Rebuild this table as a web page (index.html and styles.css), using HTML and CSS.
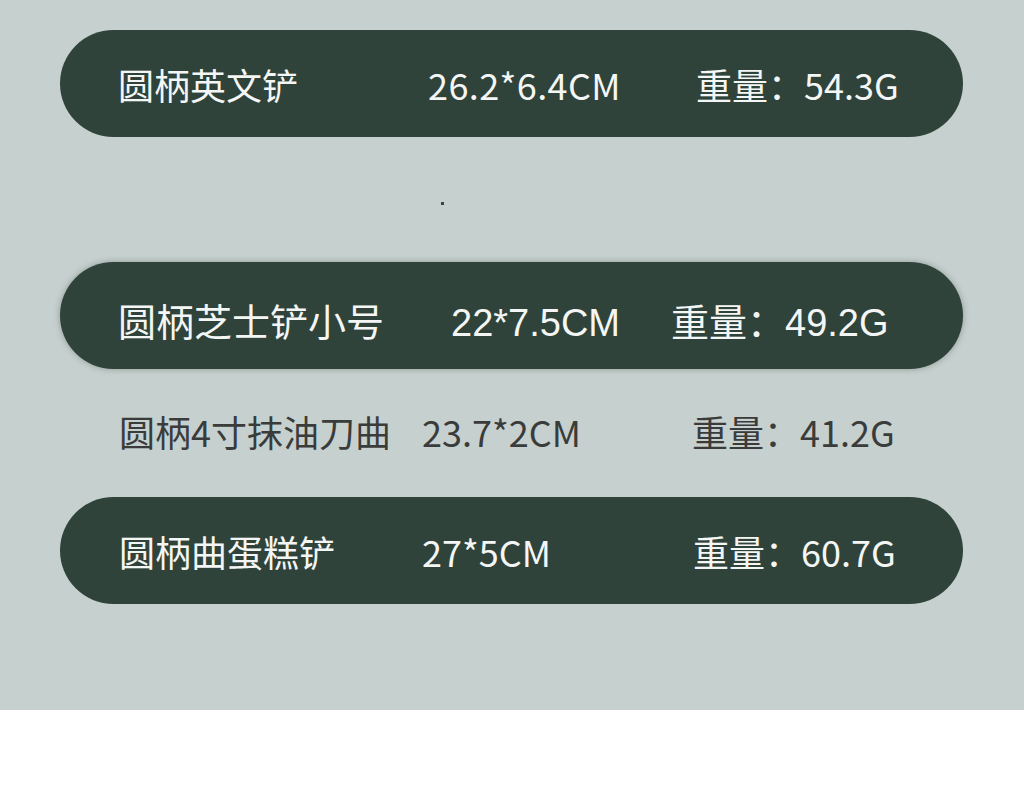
FILE: index.html
```html
<!DOCTYPE html>
<html lang="zh-CN">
<head>
<meta charset="utf-8">
<title>圆柄铲规格</title>
<link rel="stylesheet" href="styles.css">
</head>
<body>
<main class="panel">
  <div class="row pill r1">
    <span class="name">圆柄英文铲</span>
    <span class="dims">26.2*6.4CM</span>
    <span class="weight">重量：54.3G</span>
  </div>
  <div class="speck-line"><span class="speck"></span></div>
  <div class="row pill r2">
    <span class="name">圆柄芝士铲小号</span>
    <span class="dims">22*7.5CM</span>
    <span class="weight">重量：49.2G</span>
  </div>
  <div class="row plain r3">
    <span class="name">圆柄4寸抹油刀曲</span>
    <span class="dims">23.7*2CM</span>
    <span class="weight">重量：41.2G</span>
  </div>
  <div class="row pill r4">
    <span class="name">圆柄曲蛋糕铲</span>
    <span class="dims">27*5CM</span>
    <span class="weight">重量：60.7G</span>
  </div>
</main>
</body>
</html>
```

FILE: styles.css
```css
html, body {
  margin: 0;
  padding: 0;
  background: #ffffff;
}

body {
  font-family: "Noto Sans CJK SC", "Noto Sans", sans-serif;
}

.panel {
  height: 710px;
  box-sizing: border-box;
  padding-top: 30px;
  background: #c6d0ce;
  display: flex;
  flex-direction: column;
}

.row {
  display: flex;
  align-items: center;
  margin-left: 60px;
  width: 903px;
  box-sizing: border-box;
  white-space: nowrap;
  font-size: 36px;
}

.pill {
  height: 107px;
  border-radius: 54px;
  background: #2f433a;
  color: #f4f6f5;
}

.plain {
  height: 60px;
  color: #3a3c3b;
}

.r1 { padding-left: 58px; }
.r1 .name { width: 310px; }
.r1 .dims { width: 268px; letter-spacing: 0.4px; }

.speck-line {
  height: 125px;
  display: flex;
  align-items: flex-start;
}
.speck {
  margin: 65px 0 0 441px;
  width: 3px;
  height: 3px;
  background: #3b4440;
}

.r2 {
  padding-left: 58px;
  padding-top: 14px;
  font-family: "Liberation Sans", "Noto Sans CJK SC", sans-serif;
  font-size: 38px;
  line-height: 50px;
  box-shadow: 0 0 6px rgba(40, 55, 48, 0.35);
}
.r2 .name { width: 333px; }
.r2 .dims { width: 220px; }

.r3 {
  margin-top: 34px;
  padding-left: 59px;
  padding-bottom: 5px;
}
.r3 .name { width: 303px; }
.r3 .dims { width: 270px; }

.r4 {
  margin-top: 34px;
  padding-left: 59px;
}
.r4 .name { width: 303px; }
.r4 .dims { width: 271px; }
```
